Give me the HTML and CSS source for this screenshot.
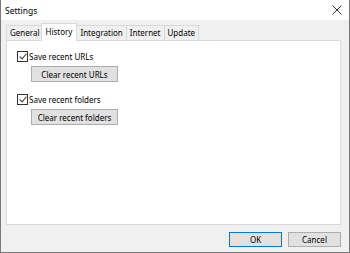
FILE: index.html
```html
<!DOCTYPE html>
<html lang="en">
<head>
    <meta charset="UTF-8">
    <title>Settings</title>
    <link rel="stylesheet" href="styles.css">
</head>
<body>

    <div class="window">
        <!-- Title bar -->
        <div class="titlebar">
            <span class="title">Settings</span>
            <span class="close">
                <svg width="10" height="10" viewBox="0 0 10 10">
                    <path d="M0.5 0.5 L9.5 9.5 M9.5 0.5 L0.5 9.5" stroke="#333" stroke-width="1" fill="none"/>
                </svg>
            </span>
        </div>

        <div class="client">
            <!-- Tabs -->
            <div class="tabs">
                <div class="tab">General</div>
                <div class="tab active">History</div>
                <div class="tab">Integration</div>
                <div class="tab">Internet</div>
                <div class="tab">Update</div>
            </div>

            <!-- History page -->
            <div class="panel">
                <label class="check-row">
                    <span class="checkbox checked"></span>
                    Save recent URLs
                </label>
                <div class="btn-row">
                    <button class="btn wide">Clear recent URLs</button>
                </div>

                <label class="check-row">
                    <span class="checkbox checked"></span>
                    Save recent folders
                </label>
                <div class="btn-row">
                    <button class="btn wide">Clear recent folders</button>
                </div>
            </div>

            <!-- Dialog buttons -->
            <div class="footer">
                <button class="btn default">OK</button>
                <button class="btn">Cancel</button>
            </div>
        </div>
    </div>

</body>
</html>
```

FILE: styles.css
```css
body {
    margin: 0;
    font-family: "Noto Sans", Arial, sans-serif;
    font-size: 8px;
    color: #000;
}
.window {
    width: 350px;
    height: 253px;
    box-sizing: border-box;
    border: 1px solid #7a7a7a;
    border-top: none;
    background: #f0f0f0;
    display: flex;
    flex-direction: column;
}
.titlebar {
    height: 20px;
    flex-shrink: 0;
    background: #fff;
    display: flex;
    align-items: center;
    justify-content: space-between;
    padding: 0 7px 0 4px;
}
.title {
    font-size: 8.5px;
}
.close {
    display: flex;
}
.client {
    flex: 1;
    padding: 4px 8px 0 5px;
    display: flex;
    flex-direction: column;
}
.tabs {
    display: flex;
    align-items: flex-end;
    height: 16px;
}
.tab {
    height: 14px;
    line-height: 14px;
    padding: 0 3px;
    border: 1px solid #d9d9d9;
    border-bottom: none;
    margin-right: -1px;
    background: #f0f0f0;
}
.tab.active {
    height: 17px;
    line-height: 15px;
    background: #fff;
    position: relative;
    z-index: 1;
    margin: 0 -1px -1px -2px;
    padding: 0 4px;
}
.panel {
    height: 185px;
    box-sizing: border-box;
    background: #fff;
    border: 1px solid #d9d9d9;
    padding: 9px 10px 0 10px;
}
.check-row {
    display: flex;
    align-items: center;
    height: 13px;
}
.checkbox {
    width: 9px;
    height: 9px;
    border: 1px solid #333;
    background: #fff;
    margin-right: 1px;
    position: relative;
}
.checkbox.checked::after {
    content: "";
    position: absolute;
    left: 3px;
    top: 0px;
    width: 3px;
    height: 6px;
    border: solid #333;
    border-width: 0 1px 1px 0;
    transform: rotate(40deg);
}
.btn-row {
    padding: 3px 0 11px 14px;
}
.btn {
    font-family: inherit;
    font-size: 8px;
    height: 16px;
    padding: 0;
    background: #e1e1e1;
    border: 1px solid #adadad;
    color: #000;
}
.btn.wide {
    width: 87px;
}
.footer {
    display: flex;
    justify-content: flex-end;
    gap: 6px;
    padding-top: 7px;
}
.footer .btn {
    width: 53px;
    height: 15px;
}
.btn.default {
    border-color: #0078d7;
}
```
